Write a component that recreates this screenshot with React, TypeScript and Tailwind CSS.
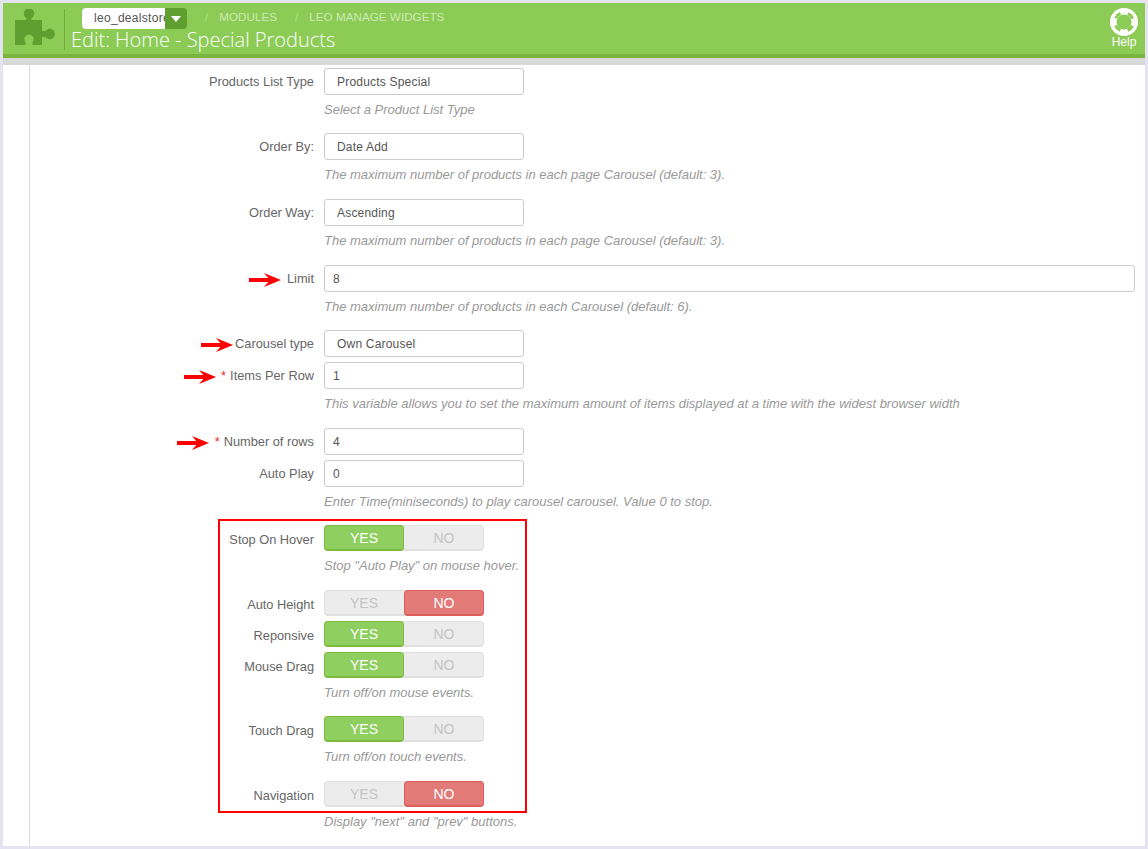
const HELP = "The maximum number of products in each page Carousel (default: 3)."

function Arrow({ className }: { className: string }) {
  return (
    <svg viewBox="0 0 32 14" className={`w-[32px] h-[14px] shrink-0 mt-[1px] ${className}`}>
      <path d="M0 5h24v4H0z" fill="#f00" />
      <path d="M15 0 L32 7 L15 14 L21 7 Z" fill="#f00" />
    </svg>
  )
}

function PuzzleIcon() {
  return (
    <svg viewBox="0 0 41 37" className="w-[41px] h-[37px] block">
      <path
        d="M0 11H11.5V9A5.2 5.2 0 1 1 16.5 9V11H27V22H30.5A5.2 5.2 0 1 1 30.5 28H27V36H17.5V33A4.5 4.5 0 1 0 10.5 33V36H0Z"
        fill="#5f9f2f"
      />
    </svg>
  )
}

function RingIcon() {
  return (
    <svg viewBox="0 0 28 28" className="w-[28px] h-[28px] block">
      <circle cx="14" cy="14" r="14" fill="#fff" />
      <circle cx="14" cy="14" r="7.5" fill="#8ccb55" />
      <circle
        cx="14"
        cy="14"
        r="9.2"
        fill="none"
        stroke="#8ccb55"
        strokeWidth="3"
        strokeDasharray="7 7.45"
        transform="rotate(23 14 14)"
      />
    </svg>
  )
}

function Field({
  label,
  value,
  help,
  wide,
  required,
  arrowGap,
  indent,
  className = "",
}: {
  label: string
  value: string
  help?: string
  wide?: boolean
  required?: boolean
  arrowGap?: string
  indent?: boolean
  className?: string
}) {
  return (
    <div className={className}>
      <div className="flex items-center">
        <div className="w-[284px] flex justify-end items-center text-[12.8px] text-[#666] pt-[1px]">
          {arrowGap && <Arrow className={arrowGap} />}
          {required && <span className="text-[#e0322c] mr-[4px]">*</span>}
          <span>{label}</span>
        </div>
        <div
          className={`ml-[10px] h-[27px] border border-[#ccc] rounded-[3px] bg-white flex items-center text-[12px] text-[#555] tracking-[0.2px] ${
            wide ? "w-[811px]" : "w-[200px]"
          } ${indent ? "pl-[12px]" : "pl-[8px]"}`}
        >
          {value}
        </div>
      </div>
      {help && <Help text={help} />}
    </div>
  )
}

function Help({ text }: { text: string }) {
  return <p className="ml-[294px] mt-[7px] h-[15px] leading-[16px] text-[13px] italic text-[#999] whitespace-nowrap">{text}</p>
}

function Toggle({ label, on, help, className = "" }: { label: string; on: boolean; help?: string; className?: string }) {
  return (
    <div className={className}>
      <div className="flex items-center">
        <div className="w-[284px] text-right text-[12.8px] text-[#666] pt-[4px]">{label}</div>
        <div className="ml-[10px] w-[160px] h-[26px] flex bg-[#ececec] rounded-[4px] border border-b-2 border-[#e0e0e0] text-[14px]">
          <div
            className={`-m-[1px] -mb-[2px] w-[80px] h-[26px] shrink-0 pt-[1px] flex items-center justify-center rounded-[4px] ${
              on ? "bg-[#8fcf5f] border border-b-2 border-[#7dbb40] text-white" : "text-[#c4c4c4]"
            }`}
          >
            YES
          </div>
          <div
            className={`-m-[1px] -mb-[2px] ml-[1px] w-[80px] h-[26px] shrink-0 pt-[1px] flex items-center justify-center rounded-[4px] ${
              on ? "text-[#c4c4c4]" : "bg-[#e27a78] border border-b-2 border-[#de5c5a] text-white"
            }`}
          >
            NO
          </div>
        </div>
      </div>
      {help && <Help text={help} />}
    </div>
  )
}

export default function App() {
  return (
    <div className="w-[1148px] h-[849px] overflow-hidden bg-[#e6e3f0] p-[3px] font-['Liberation_Sans',Arial,sans-serif]">
      <div className="h-full bg-white flex flex-col">
        <header className="h-[55px] shrink-0 bg-[#8ccb55] border-b-4 border-[#79b53f] flex items-start">
          <div className="w-[62px] h-[41px] mt-[6px] border-r border-[#6fae3c] pl-[12px]">
            <PuzzleIcon />
          </div>
          <div className="ml-[6px] flex-1">
            <div className="flex items-center h-[21px] mt-[5px]">
              <div className="ml-[11px] w-[105px] h-[21px] flex rounded-[4px] bg-[#5f9f2f] text-[12px]">
                <div className="w-[83px] overflow-hidden bg-white rounded-l-[4px] pl-[12px] leading-[21px] text-[#555] tracking-[0.3px] whitespace-nowrap">
                  leo_dealstore
                </div>
                <div className="flex-1 flex items-center justify-center">
                  <div className="w-0 h-0 border-l-[5px] border-r-[5px] border-t-[6px] border-l-transparent border-r-transparent border-t-white" />
                </div>
              </div>
              <div className="flex items-center text-[11.7px] mb-[3px]">
                <span className="ml-[18px] text-[#b3e08c]">/</span>
                <span className="ml-[11px] text-[#cdeab2]">MODULES</span>
                <span className="ml-[18px] text-[#b3e08c]">/</span>
                <span className="ml-[11px] text-[#cdeab2]">LEO MANAGE WIDGETS</span>
              </div>
            </div>
            <h1 className="-mt-[1px] text-[20px] leading-[24px] font-light text-white font-['Open_Sans',sans-serif]">
              Edit: Home - Special Products
            </h1>
          </div>
          <div className="w-[44px] -mr-[1px] flex flex-col items-center pt-[5px] text-white">
            <RingIcon />
            <span className="text-[12px] leading-[13px]">Help</span>
          </div>
        </header>
        <div className="h-[7px] shrink-0 bg-[#d9d9d9]" />
        <main className="flex-1 ml-[26px] border-l border-[#dddddd] pt-[3px]">
          <Field label="Products List Type" value="Products Special" indent help="Select a Product List Type" />
          <Field className="mt-[16px]" label="Order By:" value="Date Add" indent help={HELP} />
          <Field className="mt-[17px]" label="Order Way:" value="Ascending" indent help={HELP} />
          <Field
            className="mt-[17px]"
            label="Limit"
            value="8"
            wide
            arrowGap="mr-[6px]"
            help="The maximum number of products in each Carousel (default: 6)."
          />
          <Field className="mt-[16px]" label="Carousel type" value="Own Carousel" indent arrowGap="mr-[2px]" />
          <Field
            className="mt-[5px]"
            label="Items Per Row"
            value="1"
            required
            arrowGap="mr-[5px]"
            help="This variable allows you to set the maximum amount of items displayed at a time with the widest browser width"
          />
          <Field className="mt-[17px]" label="Number of rows" value="4" required arrowGap="mr-[6px]" />
          <Field
            className="mt-[5px]"
            label="Auto Play"
            value="0"
            help="Enter Time(miniseconds) to play carousel carousel. Value 0 to stop."
          />
          <div className="relative mt-[16px]">
            <div className="absolute left-[188px] top-[-6px] w-[309px] h-[294px] border-2 border-[#f00] pointer-events-none" />
            <Toggle label="Stop On Hover" on help={'Stop "Auto Play" on mouse hover.'} />
            <Toggle className="mt-[17px]" label="Auto Height" on={false} />
            <Toggle className="mt-[5px]" label="Reponsive" on />
            <Toggle className="mt-[5px]" label="Mouse Drag" on help="Turn off/on mouse events." />
            <Toggle className="mt-[16px]" label="Touch Drag" on help="Turn off/on touch events." />
            <Toggle className="mt-[17px]" label="Navigation" on={false} help={'Display "next" and "prev" buttons.'} />
          </div>
        </main>
      </div>
    </div>
  )
}
